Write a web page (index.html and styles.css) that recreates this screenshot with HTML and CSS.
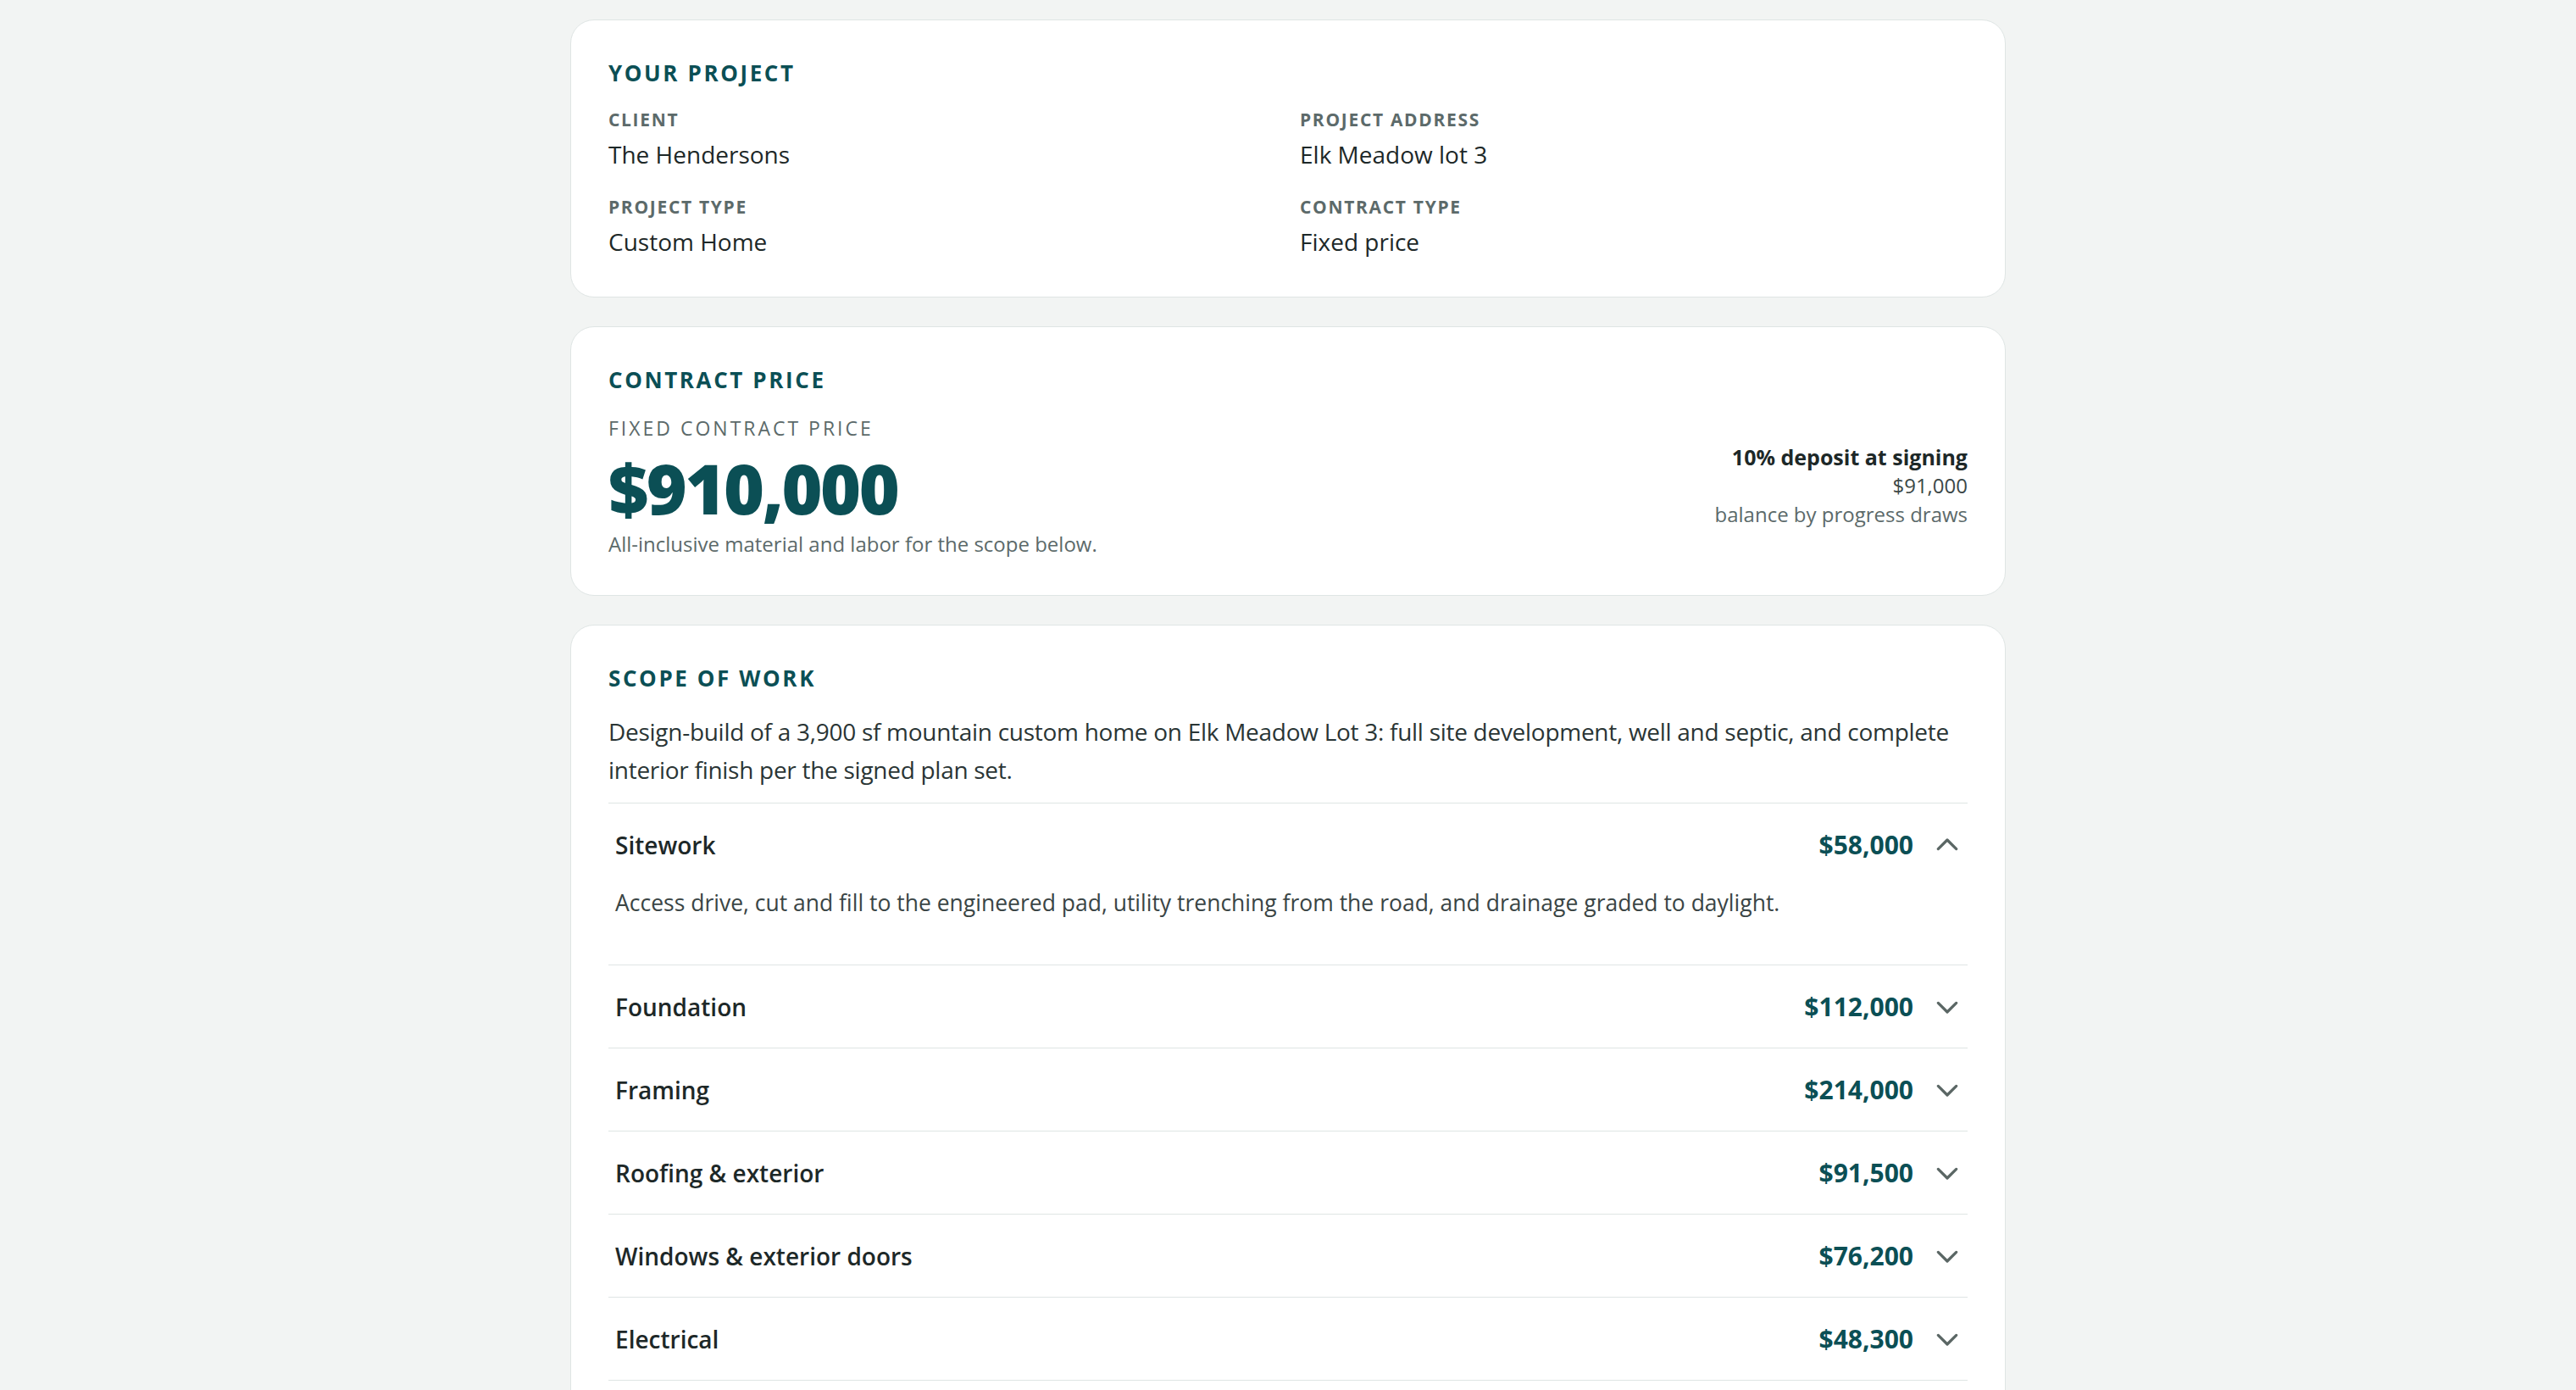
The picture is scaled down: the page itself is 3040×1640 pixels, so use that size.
FILE: index.html
```html
<!DOCTYPE html>
<html lang="en">
<head>
    <meta charset="UTF-8">
    <meta name="viewport" content="width=device-width, initial-scale=1.0">
    <title>Your Project - Contract</title>
    <link rel="stylesheet" href="styles.css">
</head>
<body>
    <div class="page">
        <section class="card">
            <h2 class="card-title">Your Project</h2>
            <div class="facts">
                <div class="fact">
                    <div class="fact-label">Client</div>
                    <div class="fact-value">The Hendersons</div>
                </div>
                <div class="fact">
                    <div class="fact-label">Project Address</div>
                    <div class="fact-value">Elk Meadow lot 3</div>
                </div>
                <div class="fact">
                    <div class="fact-label">Project Type</div>
                    <div class="fact-value">Custom Home</div>
                </div>
                <div class="fact">
                    <div class="fact-label">Contract Type</div>
                    <div class="fact-value">Fixed price</div>
                </div>
            </div>
        </section>

        <section class="card">
            <h2 class="card-title">Contract Price</h2>
            <div class="price-row">
                <div class="price-main">
                    <div class="price-label">Fixed contract price</div>
                    <div class="price-big">$910,000</div>
                    <div class="price-note">All-inclusive material and labor for the scope below.</div>
                </div>
                <div class="deposit">
                    <div class="deposit-title">10% deposit at signing</div>
                    <div class="deposit-amount">$91,000</div>
                    <div class="deposit-note">balance by progress draws</div>
                </div>
            </div>
        </section>

        <section class="card">
            <h2 class="card-title">Scope of Work</h2>
            <p class="scope-intro">Design-build of a 3,900 sf mountain custom home on Elk Meadow Lot 3: full site development, well and septic, and complete interior finish per the signed plan set.</p>

            <div class="scope-list">
                <div class="scope-item open">
                    <div class="item-head">
                        <span class="item-name">Sitework</span>
                        <span class="item-price">$58,000</span>
                        <svg class="chevron" viewBox="0 0 24 24"><path d="M4 15.5l8-8 8 8"/></svg>
                    </div>
                    <div class="item-desc">Access drive, cut and fill to the engineered pad, utility trenching from the road, and drainage graded to daylight.</div>
                </div>
                <div class="scope-item">
                    <div class="item-head">
                        <span class="item-name">Foundation</span>
                        <span class="item-price">$112,000</span>
                        <svg class="chevron" viewBox="0 0 24 24"><path d="M4 8.5l8 8 8-8"/></svg>
                    </div>
                </div>
                <div class="scope-item">
                    <div class="item-head">
                        <span class="item-name">Framing</span>
                        <span class="item-price">$214,000</span>
                        <svg class="chevron" viewBox="0 0 24 24"><path d="M4 8.5l8 8 8-8"/></svg>
                    </div>
                </div>
                <div class="scope-item">
                    <div class="item-head">
                        <span class="item-name">Roofing &amp; exterior</span>
                        <span class="item-price">$91,500</span>
                        <svg class="chevron" viewBox="0 0 24 24"><path d="M4 8.5l8 8 8-8"/></svg>
                    </div>
                </div>
                <div class="scope-item">
                    <div class="item-head">
                        <span class="item-name">Windows &amp; exterior doors</span>
                        <span class="item-price">$76,200</span>
                        <svg class="chevron" viewBox="0 0 24 24"><path d="M4 8.5l8 8 8-8"/></svg>
                    </div>
                </div>
                <div class="scope-item">
                    <div class="item-head">
                        <span class="item-name">Electrical</span>
                        <span class="item-price">$48,300</span>
                        <svg class="chevron" viewBox="0 0 24 24"><path d="M4 8.5l8 8 8-8"/></svg>
                    </div>
                </div>
            </div>
        </section>
    </div>
</body>
</html>
```

FILE: styles.css
```css
body {
    margin: 0;
    background-color: #f2f4f3;
    font-family: "Segoe UI", "Open Sans", sans-serif;
    color: #1d2828;
}
.page {
    max-width: 1694px;
    margin: 0 auto;
    padding: 23px 0 40px;
    display: flex;
    flex-direction: column;
    gap: 34px;
}
.card {
    background: #fff;
    border: 1px solid #dfe5e4;
    border-radius: 28px;
    padding: 45px 44px;
}
.card-title {
    margin: 0 0 24px;
    font-size: 26px;
    line-height: 34px;
    font-weight: 700;
    letter-spacing: 0.1em;
    text-transform: uppercase;
    color: #0b4f55;
}
.facts {
    display: grid;
    grid-template-columns: 1fr 1fr;
    column-gap: 28px;
    row-gap: 28px;
}
.fact-label {
    font-size: 21px;
    line-height: 28px;
    font-weight: 700;
    letter-spacing: 0.08em;
    text-transform: uppercase;
    color: #5c6a6a;
    margin-bottom: 7px;
}
.fact-value {
    font-size: 28px;
    line-height: 40px;
    color: #1d2828;
}
.price-row {
    display: flex;
    justify-content: space-between;
    align-items: center;
}
.price-label {
    font-size: 23px;
    line-height: 33px;
    letter-spacing: 0.13em;
    text-transform: uppercase;
    color: #5c6a6a;
}
.price-big {
    margin: 8px 0 7px;
    font-size: 82px;
    line-height: 1.1;
    font-weight: 800;
    letter-spacing: -0.03em;
    color: #0b4f55;
}
.price-note {
    font-size: 24px;
    line-height: 30px;
    color: #5c6a6a;
}
.deposit {
    text-align: right;
    font-size: 24px;
    line-height: 34px;
}
.deposit-title {
    font-size: 25px;
    font-weight: 700;
    color: #1d2828;
}
.deposit-amount {
    color: #3c4848;
}
.deposit-note {
    color: #5c6a6a;
}
.scope-intro {
    margin: 0 0 16px;
    font-size: 28px;
    line-height: 1.6;
    letter-spacing: -0.01em;
    color: #2a3535;
}
.scope-list {
    border-bottom: 1px solid #dfe5e4;
}
.scope-item {
    border-top: 1px solid #dfe5e4;
}
.item-head {
    display: flex;
    align-items: center;
    gap: 24px;
    padding: 28px 8px 27px;
    font-size: 28px;
    line-height: 42px;
    cursor: pointer;
}
.item-name {
    flex: 1;
    font-weight: 600;
    color: #1d2828;
}
.item-price {
    font-size: 30px;
    font-weight: 700;
    color: #0b4f55;
}
.chevron {
    width: 32px;
    height: 32px;
    fill: none;
    stroke: #5a6664;
    stroke-width: 2.4;
    stroke-linecap: round;
    stroke-linejoin: round;
}
.item-desc {
    padding: 0 8px 53px;
    font-size: 26.5px;
    line-height: 40px;
    color: #3a4545;
}
```
